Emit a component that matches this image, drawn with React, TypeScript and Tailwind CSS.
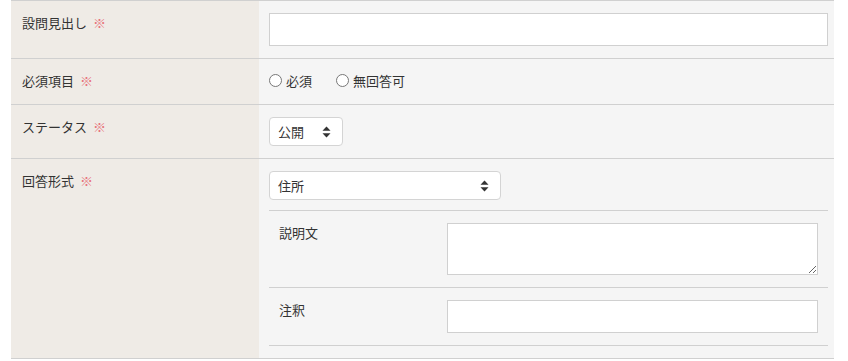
import React from "react"

const font = { fontFamily: '"Noto Sans CJK JP", "Noto Sans", sans-serif' }

function Req() {
  return <span className="ml-[6px] text-[#e8737a]">※</span>
}

function Arrows() {
  return (
    <svg width="9" height="12" viewBox="0 0 9 12" className="text-[#333]">
      <path d="M4.5 0.5 L8.5 4.8 H0.5 Z" fill="currentColor" />
      <path d="M4.5 11.5 L8.5 7.2 H0.5 Z" fill="currentColor" />
    </svg>
  )
}

function Select({ value, width }: { value: string; width: string }) {
  return (
    <div
      className={`${width} h-[29px] flex items-center justify-between pl-[8px] pr-[11px] bg-white border border-[#d4d4d4] rounded-[4px] text-[13px] text-[#333]`}
    >
      <span>{value}</span>
      <Arrows />
    </div>
  )
}

function Radio({ label }: { label: string }) {
  return (
    <label className="flex items-center gap-[4px] text-[13px] text-[#333]">
      <span className="w-[13px] h-[13px] rounded-full border border-[#777] bg-white" />
      {label}
    </label>
  )
}

function Row({ label, children, h }: { label: string; children: React.ReactNode; h?: string }) {
  return (
    <div className={`flex border-b border-[#d0d0d0] ${h ?? ""}`}>
      <div className="w-[248px] shrink-0 bg-[#efebe6] pl-[11px] pt-[12px] text-[13px] text-[#333] leading-[19px]">
        {label}
        <Req />
      </div>
      <div className="flex-1 bg-[#f5f5f5] pl-[10px] pr-[6px] py-[12px]">{children}</div>
    </div>
  )
}

function SubRow({ label, children }: { label: string; children: React.ReactNode }) {
  return (
    <div className="flex border-b border-[#d0d0d0] py-[12px]">
      <div className="w-[178px] shrink-0 pl-[10px] text-[13px] text-[#333] leading-[19px]">{label}</div>
      <div className="flex-1 pr-[10px]">{children}</div>
    </div>
  )
}

export default function App() {
  return (
    <div className="w-[848px] h-[361px] bg-white pl-[11px] pr-[14px]" style={font}>
      <div className="border-t border-[#d0d0d0]">
        <Row label="設問見出し">
          <div className="h-[33px] bg-white border border-[#d0d0d0]" />
        </Row>
        <Row label="必須項目" h="h-[46px]">
          <div className="flex items-center gap-[24px] h-full -mt-[1px]">
            <Radio label="必須" />
            <Radio label="無回答可" />
          </div>
        </Row>
        <Row label="ステータス">
          <Select value="公開" width="w-[74px]" />
        </Row>
        <Row label="回答形式">
          <Select value="住所" width="w-[232px]" />
          <div className="mt-[10px] border-t border-[#d0d0d0]">
            <SubRow label="説明文">
              <textarea className="block w-full h-[52px] bg-white border border-[#d0d0d0] outline-none" />
            </SubRow>
            <SubRow label="注釈">
              <div className="h-[33px] bg-white border border-[#d0d0d0]" />
            </SubRow>
          </div>
        </Row>
      </div>
    </div>
  )
}
